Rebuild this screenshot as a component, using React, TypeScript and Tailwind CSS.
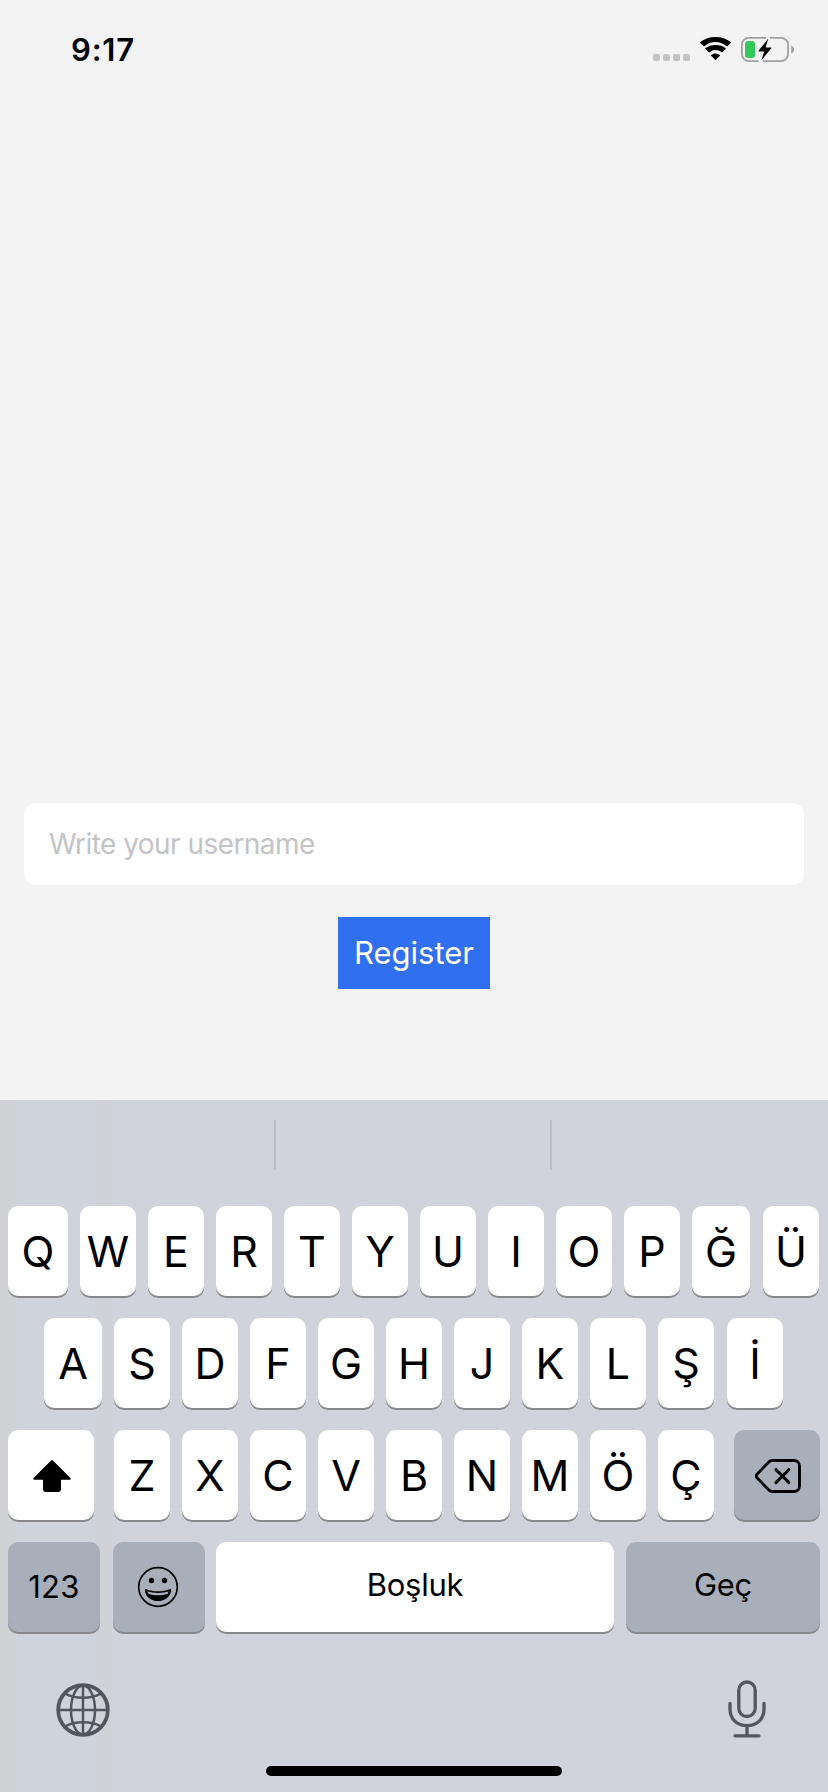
import type { ReactNode } from "react";

type KeyProps = { children: ReactNode; className?: string; tone?: "light" | "dark" };

function Key({ children, className = "w-14", tone = "light" }: KeyProps) {
  const fill = tone === "light" ? "bg-white" : "bg-[#a8aeba]";
  return (
    <button
      type="button"
      className={`flex h-[90px] shrink-0 items-center justify-center rounded-[10px] text-black shadow-[0_2px_0_#88898d] ${fill} ${className}`}
    >
      {children}
    </button>
  );
}

function Letter({ value, className }: { value: string; className?: string }) {
  return (
    <Key className={className}>
      <span className="text-[43px] leading-[90px]">{value}</span>
    </Key>
  );
}

function StatusBar() {
  return (
    <header className="flex h-[100px] items-start justify-between pl-[71px] pr-[33px] pt-[30px]">
      <time className="text-[31px] font-semibold leading-10 tracking-[0.8px] text-black">9:17</time>
      <div className="flex items-start pt-[7px]">
        <div className="flex gap-[3px] pt-[17px]">
          {[0, 1, 2, 3].map((dot) => (
            <span key={dot} className="size-[7px] rounded-[2px] bg-[#c3c3c3]" />
          ))}
        </div>
        <svg className="ml-2.5 h-6 w-8" viewBox="0 0 32 24" fill="#000">
          <path d="M15.5 4.9c4.3 0 8.2 1.7 11.1 4.4.3.2.6.2.8 0l3.4-3.2c.3-.3.3-.7 0-1C26.7 1.9 21.3 0 15.5 0S4.3 1.9.2 5.1c-.3.3-.3.7 0 1l3.4 3.2c.2.2.6.2.8 0A16.3 16.3 0 0 1 15.5 4.9z" />
          <path d="M15.5 13c2.300 0 4.500.9 6.100 2.300.3.2.6.2.8 0l3.200-3.200c.3-.3.3-.7 0-1A15 15 0 0 0 15.500 8a15 15 0 0 0-10 3.100c-.3.3-.3.7 0 1l3.200 3.200c.2.2.6.2.8 0A9.300 9.300 0 0 1 15.500 13z" />
          <path d="M15.500 16.400c-1.700 0-3.200.6-4.300 1.500-.3.3-.3.6 0 .9l3.800 4c.3.3.7.3 1 0l3.800-4c.3-.3.3-.6 0-.9a6.800 6.800 0 0 0-4.300-1.500z" />
        </svg>
        <svg className="ml-[9px] h-[25px] w-[54px]" viewBox="0 0 54 25" fill="none">
          <path
            d="M25 .9H8A7.100 7.100 0 0 0 .9 8v9A7.100 7.100 0 0 0 8 24.100h9.500M29 .9h11A7.100 7.100 0 0 1 47.100 8v9a7.100 7.100 0 0 1-7.100 7.100H22"
            stroke="#a0a0a0"
            strokeWidth="1.8"
          />
          <path d="M50.200 8.500c4 1.500 4 6.500 0 8z" fill="#a0a0a0" />
          <rect x="4" y="4" width="10" height="17" rx="3.200" fill="#34c759" />
          <path d="M27.300 1.600 17.600 13.600c-.3.400-.1.800.4.800h5.300l-2.900 8.800 9.900-11.900c.3-.4.100-.8-.4-.8h-5.300z" fill="#000" />
        </svg>
      </div>
    </header>
  );
}

function ShiftIcon() {
  return (
    <svg className="ml-0.5 mt-0.5 h-8 w-[38px]" viewBox="0 0 38 32">
      <path d="M17.800.7a1.700 1.700 0 0 1 2.400 0l17 17.100c1 1 .5 2-.7 2H28v9.200a3 3 0 0 1-3 3H13a3 3 0 0 1-3-3v-9.200H1.500c-1.200 0-1.700-1-.7-2z" />
    </svg>
  );
}

function BackspaceIcon() {
  return (
    <svg
      className="ml-px mt-0.5 h-[34px] w-[46px]"
      viewBox="0 0 46 34"
      fill="none"
      stroke="#000"
      strokeWidth="2.9"
      strokeLinecap="round"
      strokeLinejoin="round"
    >
      <path d="M17.500 1.500H39a5.500 5.500 0 0 1 5.500 5.500v20a5.500 5.500 0 0 1-5.500 5.500H17.500c-1.500 0-2.700-.5-3.700-1.500L2 18.800c-1.100-1.100-1.100-2.500 0-3.600L13.800 3c1-1 2.200-1.500 3.700-1.500z" />
      <path d="m20.900 10.600 13 13m0-13-13 13" />
    </svg>
  );
}

function EmojiIcon() {
  return (
    <svg className="mr-0.5 size-[42px]" viewBox="0 0 42 42" fill="none">
      <circle cx="21" cy="21" r="19.300" stroke="#000" strokeWidth="1.700" />
      <circle cx="14.500" cy="14.500" r="2.700" fill="#000" />
      <circle cx="27.500" cy="14.500" r="2.700" fill="#000" />
      <path d="M9.500 23.200c7 2.700 16 2.700 23 0 1-.3 1.700.1 1.600 1.200-.5 6-6 10.600-13.100 10.600S8.400 30.400 7.900 24.400c-.1-1.100.6-1.500 1.600-1.200z" fill="#000" />
      <path d="M10.200 25.300c6.500 2.300 15.100 2.300 21.600 0-.3 1.200-.8 2-1.500 2.700-5.600 1.800-13 1.800-18.600 0-.7-.7-1.200-1.500-1.500-2.700z" fill="#a8aeba" />
    </svg>
  );
}

function GlobeIcon() {
  return (
    <svg className="size-[54px]" viewBox="0 0 54 54" fill="none" stroke="#51565f" strokeWidth="2.500">
      <circle cx="27" cy="27" r="24.800" strokeWidth="3.800" />
      <path d="M27 2v50M2 27h50" />
      <ellipse cx="27" cy="27" rx="12" ry="24.500" />
      <path d="M9 10.500c9.500 5.700 26.500 5.700 36 0M9 43.500c9.500-5.700 26.500-5.700 36 0" />
    </svg>
  );
}

function MicIcon() {
  return (
    <svg
      className="h-[58px] w-[38px]"
      viewBox="0 0 38 58"
      fill="none"
      stroke="#51565f"
      strokeWidth="3.300"
      strokeLinecap="round"
    >
      <rect x="10.800" y="2" width="16.400" height="34.500" rx="8.200" />
      <path d="M2 23.500v5.500c0 10 7 16.700 17 16.700S36 39 36 29v-5.500M19 46v9.500M7 55.800h24" />
    </svg>
  );
}

function Keyboard() {
  return (
    <section className="flex h-[692px] flex-col bg-[linear-gradient(90deg,#d1d2d6_0_16px,#cfd3dc_16px_96px,#d0d2d8_96px_112px,#d0d3db_112px)] px-2">
      <div className="flex h-[106px] pt-5">
        <div className="h-[50px] w-[268px] border-r-2 border-[#bbbdc1]" />
        <div className="h-[50px] w-[276px] border-r-2 border-[#bbbdc1]" />
      </div>
      <div className="flex flex-col gap-[22px]">
        <div className="flex gap-3">
          <Letter value="Q" className="w-[60px]" />
          {"WERTYUIOP".split("").map((value) => (
            <Letter key={value} value={value} />
          ))}
          <Letter value="Ğ" className="w-[58px]" />
          <Letter value="Ü" className="ml-px w-14" />
        </div>
        <div className="flex gap-3 pl-9">
          <Letter value="A" className="w-[58px]" />
          {"SDFGHJKLŞ".split("").map((value) => (
            <Letter key={value} value={value} />
          ))}
          <Letter value="İ" className="ml-px w-14" />
        </div>
        <div className="flex justify-between">
          <Key className="w-[86px]">
            <ShiftIcon />
          </Key>
          <div className="flex gap-3">
            {"ZXCVBNMÖÇ".split("").map((value) => (
              <Letter key={value} value={value} />
            ))}
          </div>
          <Key className="w-[86px]" tone="dark">
            <BackspaceIcon />
          </Key>
        </div>
        <div className="flex">
          <Key className="w-[92px]" tone="dark">
            <span className="text-[31px] leading-[90px] tracking-[0.3px]">123</span>
          </Key>
          <Key className="ml-[13px] w-[92px]" tone="dark">
            <EmojiIcon />
          </Key>
          <Key className="ml-[11px] w-[398px]">
            <span className="pb-[3px] text-[31px] tracking-[-0.3px]">Boşluk</span>
          </Key>
          <Key className="ml-3 w-[194px]" tone="dark">
            <span className="pb-[3px] text-[31px] tracking-[-0.3px]">Geç</span>
          </Key>
        </div>
      </div>
      <div className="flex justify-between pl-12 pr-[54px] pt-12">
        <div className="pt-[3px]">
          <GlobeIcon />
        </div>
        <MicIcon />
      </div>
      <div className="mx-auto mb-4 mt-auto h-2.5 w-[296px] rounded-full bg-black" />
    </section>
  );
}

export default function App() {
  return (
    <main className="flex h-[1792px] w-[828px] flex-col overflow-hidden bg-[#f3f3f3] font-['Inter',sans-serif]">
      <StatusBar />
      <form className="flex grow flex-col items-center px-6 pt-[703px]">
        <input
          type="text"
          placeholder="Write your username"
          className="h-[82px] w-full rounded-xl bg-white px-[25px] text-[28px] tracking-[-0.55px] outline-none placeholder:text-[#c4c4c6]"
        />
        <button type="button" className="mt-8 h-[72px] w-[152px] bg-[#2f6ff0] text-[31px] text-white">
          Register
        </button>
      </form>
      <Keyboard />
    </main>
  );
}
